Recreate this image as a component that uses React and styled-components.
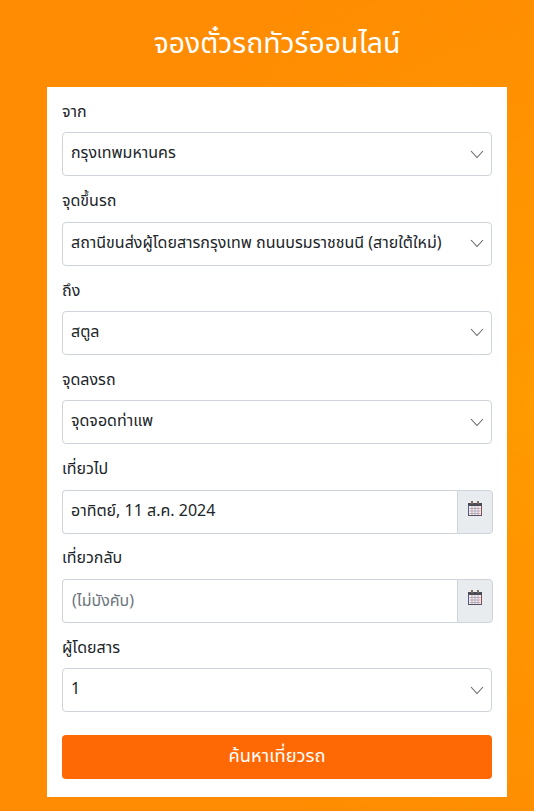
import React from "react";
import styled, { createGlobalStyle } from "styled-components";

const Global = createGlobalStyle`
  html, body { margin: 0; padding: 0; }
  body { font-family: Tahoma, "Noto Sans Thai", "Noto Sans", "Liberation Sans", sans-serif; }
`;
const Page = styled.div`
  width: 534px; height: 811px; overflow: hidden; box-sizing: border-box;
  padding: 0 27px 0 47px;
  background: radial-gradient(ellipse 420px 500px at 100% 50%, #ff9a00 0%, #ff8c02 100%);
`;
const Title = styled.h1`
  margin: 0; height: 87px; display: flex; align-items: center; justify-content: center;
  padding-top: 2px; box-sizing: border-box;
  font-size: 28.4px; font-weight: 400; color: #fff;
`;
const Card = styled.form`
  width: 460px; height: 710px; box-sizing: border-box; background: #fff;
  padding: 15px 15px 18px; display: flex; flex-direction: column;
`;
const Field = styled.div`
  height: 89.3px; display: flex; flex-direction: column;
`;
const Label = styled.label`
  height: 30.4px; font-size: 16px; line-height: 20px; color: #212529;
`;
const Control = styled.div`
  height: 44px; box-sizing: border-box; border: 1px solid #ced4da; border-radius: 4px;
  display: flex; align-items: center; justify-content: space-between;
  padding: 0 7px 0 8px; font-size: 16px; color: #212529; background: #fff;
`;
const Value = styled.span`
  margin-bottom: 2px;
`;
const Group = styled.div`
  height: 44px; display: flex; margin-right: -1px;
`;
const GroupInput = styled.div`
  flex: 1; box-sizing: border-box; border: 1px solid #ced4da; border-right: 0;
  border-radius: 4px 0 0 4px; display: flex; align-items: center;
  padding: 0 9px ${p => (p.$placeholder ? "0" : "2px")} ${p => (p.$placeholder ? "9px" : "8px")};
  font-size: 16px; color: ${p => (p.$placeholder ? "#6c757d" : "#212529")};
`;
const Addon = styled.div`
  width: 36px; box-sizing: border-box; background: #e9ecef; border: 1px solid #ced4da;
  border-radius: 0 4px 4px 0; display: flex; align-items: center; justify-content: center;
  padding-bottom: 7px;
`;
const Button = styled.button`
  height: 44px; margin-top: 8px; border: 0; border-radius: 4px; background: #ff6905; color: #fff;
  font: inherit; font-size: 18.3px;
`;

const Chevron = () => (
  <svg width="14" height="9" viewBox="0 0 14 9" fill="none" stroke="#63676b" strokeWidth="1.1">
    <path d="M1 1l6 6.5L13 1" />
  </svg>
);
const Calendar = () => (
  <svg width="14" height="15" viewBox="0 0 14 15">
    <rect x="1" y="3" width="12" height="11.5" fill="#f6f1ee" />
    <path d="M1.5 7.5h11M1.5 10h11M1.5 12.5h11" stroke="#b3a9c4" strokeWidth="1" />
    <path d="M4 5v9" stroke="#c9a58f" strokeWidth="1" />
    <path d="M7 5v9" stroke="#9fb0cc" strokeWidth="1" />
    <path d="M10 5v9" stroke="#cfa3a8" strokeWidth="1" />
    <path d="M0.5 3v11.5" stroke="#4f5a93" strokeWidth="1" />
    <path d="M13.5 3v11.5" stroke="#8a4f52" strokeWidth="1" />
    <path d="M0 14.5h14" stroke="#55505f" strokeWidth="1" />
    <rect x="0" y="2" width="14" height="3" fill="#4a4d58" />
    <rect x="3" y="0" width="2" height="3" fill="#7d6a58" />
    <rect x="9" y="0" width="2" height="3" fill="#7d6a58" />
  </svg>
);

const Select = ({ label, value }) => (
  <Field>
    <Label>{label}</Label>
    <Control>
      <Value>{value}</Value>
      <Chevron />
    </Control>
  </Field>
);
const DateField = ({ label, value, placeholder }) => (
  <Field>
    <Label>{label}</Label>
    <Group>
      <GroupInput $placeholder={placeholder}>{value}</GroupInput>
      <Addon><Calendar /></Addon>
    </Group>
  </Field>
);

export default function App() {
  return (
    <Page>
      <Global />
      <Title>จองตั๋วรถทัวร์ออนไลน์</Title>
      <Card>
        <Select label="จาก" value="กรุงเทพมหานคร" />
        <Select label="จุดขึ้นรถ" value="สถานีขนส่งผู้โดยสารกรุงเทพ ถนนบรมราชชนนี (สายใต้ใหม่)" />
        <Select label="ถึง" value="สตูล" />
        <Select label="จุดลงรถ" value="จุดจอดท่าแพ" />
        <DateField label="เที่ยวไป" value="อาทิตย์, 11 ส.ค. 2024" />
        <DateField label="เที่ยวกลับ" value="(ไม่บังคับ)" placeholder />
        <Select label="ผู้โดยสาร" value="1" />
        <Button type="button">ค้นหาเที่ยวรถ</Button>
      </Card>
    </Page>
  );
}
